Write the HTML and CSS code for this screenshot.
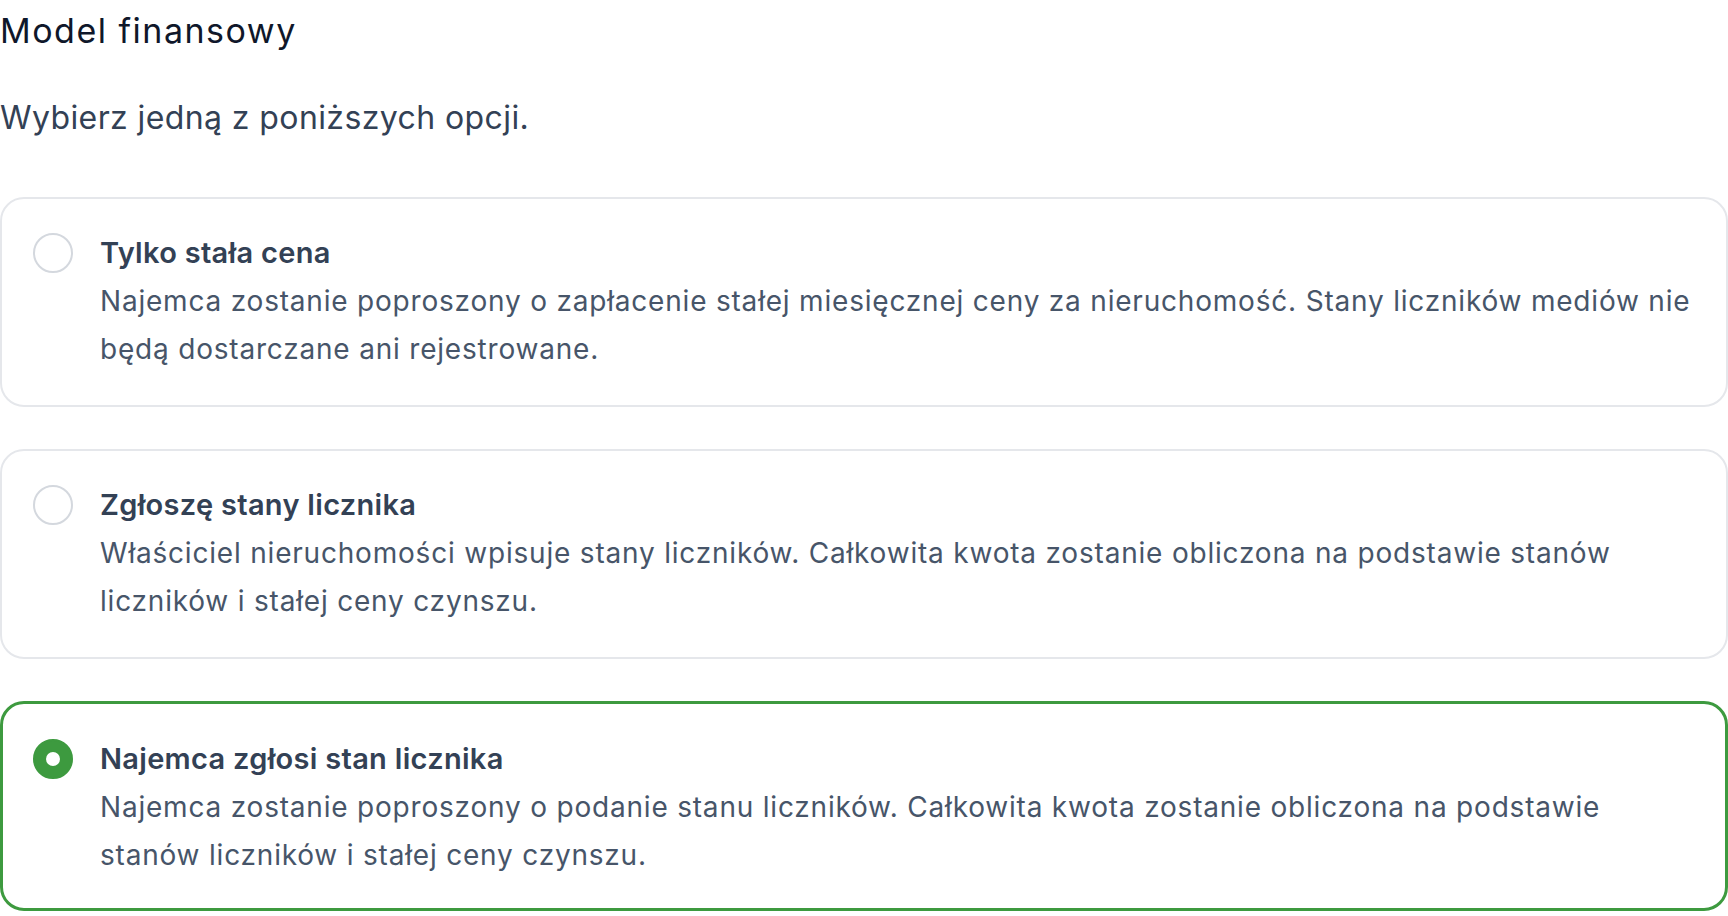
FILE: index.html
```html
<!DOCTYPE html>
<html lang="pl">
<head>
  <meta charset="UTF-8">
  <meta name="viewport" content="width=device-width, initial-scale=1.0">
  <title>Model finansowy</title>
  <link rel="stylesheet" href="styles.css">
</head>
<body>
  <div class="page">
    <h1 class="title">Model finansowy</h1>
    <p class="subtitle">Wybierz jedną z poniższych opcji.</p>

    <div class="options">
      <label class="option">
        <span class="radio"></span>
        <span class="option-text">
          <span class="option-title">Tylko stała cena</span>
          <span class="option-desc">Najemca zostanie poproszony o zapłacenie stałej miesięcznej ceny za nieruchomość. Stany liczników mediów nie będą dostarczane ani rejestrowane.</span>
        </span>
      </label>

      <label class="option">
        <span class="radio"></span>
        <span class="option-text">
          <span class="option-title">Zgłoszę stany licznika</span>
          <span class="option-desc">Właściciel nieruchomości wpisuje stany liczników. Całkowita kwota zostanie obliczona na podstawie stanów liczników i stałej ceny czynszu.</span>
        </span>
      </label>

      <label class="option selected">
        <span class="radio"></span>
        <span class="option-text">
          <span class="option-title">Najemca zgłosi stan licznika</span>
          <span class="option-desc">Najemca zostanie poproszony o podanie stanu liczników. Całkowita kwota zostanie obliczona na podstawie stanów liczników i stałej ceny czynszu.</span>
        </span>
      </label>
    </div>
  </div>

  <script>
    document.querySelectorAll('.option').forEach(option => {
      option.addEventListener('click', () => {
        document.querySelectorAll('.option').forEach(o => o.classList.remove('selected'));
        option.classList.add('selected');
      });
    });
  </script>
</body>
</html>
```

FILE: styles.css
```css
* {
  margin: 0;
  padding: 0;
  box-sizing: border-box;
}
body {
  font-family: "Inter", "Liberation Sans", sans-serif;
  background: #fff;
  color: #334155;
}
.page {
  padding-top: 9px;
}
.title {
  font-size: 34px;
  font-weight: 400;
  line-height: 44px;
  letter-spacing: 1.5px;
  color: #0f172a;
}
.subtitle {
  font-size: 32px;
  line-height: 44px;
  letter-spacing: 0.4px;
  margin-top: 43px;
  color: #334155;
}
.options {
  margin-top: 57px;
  display: flex;
  flex-direction: column;
  gap: 42px;
}
.option {
  display: flex;
  align-items: flex-start;
  gap: 27px;
  padding: 30px 30px 32px 31px;
  border: 2px solid #e5e7eb;
  border-radius: 24px;
  cursor: pointer;
}
.option.selected {
  border: 3px solid #3d9a3f;
  padding: 31px 29px 29px 30px;
}
.radio {
  flex-shrink: 0;
  width: 40px;
  height: 40px;
  margin-top: 4px;
  border: 2px solid #d4d8de;
  border-radius: 50%;
  display: flex;
  align-items: center;
  justify-content: center;
}
.option.selected .radio {
  background: #3d9a3f;
  border-color: #3d9a3f;
}
.option.selected .radio::after {
  content: "";
  width: 14px;
  height: 14px;
  border-radius: 50%;
  background: #fff;
}
.option-text {
  display: flex;
  flex-direction: column;
  font-size: 28px;
  line-height: 48px;
  letter-spacing: 0.8px;
}
.option-title {
  font-size: 29px;
  font-weight: 600;
  letter-spacing: 0.3px;
  color: #334155;
}
.option-desc {
  color: #475569;
}
```
